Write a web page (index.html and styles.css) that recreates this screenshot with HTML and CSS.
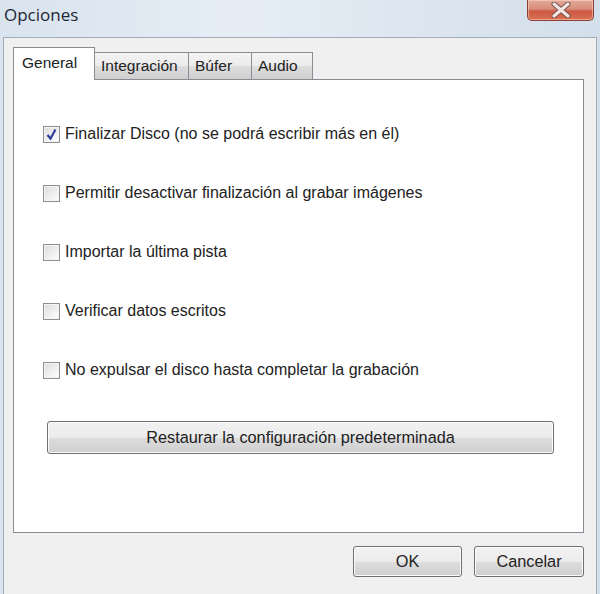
FILE: index.html
```html
<!DOCTYPE html>
<html lang="es">
<head>
    <meta charset="UTF-8">
    <title>Opciones</title>
    <link rel="stylesheet" href="styles.css">
</head>
<body>
    <div class="window">
        <div class="titlebar">
            <span class="title">Opciones</span>
            <button class="close" title="Cerrar">
                <svg width="22" height="16" viewBox="0 0 22 16">
                    <path d="M4 2 L18 14 M18 2 L4 14" stroke="#7a5552" stroke-width="5" stroke-linecap="round"/>
                    <path d="M4 2 L18 14 M18 2 L4 14" stroke="#f4e6e3" stroke-width="3" stroke-linecap="round"/>
                </svg>
            </button>
        </div>

        <div class="client">
            <div class="tabs">
                <div class="tab active">General</div>
                <div class="tab">Integración</div>
                <div class="tab">Búfer</div>
                <div class="tab">Audio</div>
            </div>

            <div class="panel">
                <label class="option">
                    <span class="box checked">
                        <svg width="13" height="13" viewBox="0 0 13 13">
                            <path d="M2.5 7 L5.5 10.5 L10.5 1.5" fill="none" stroke="#2f3f99" stroke-width="2.2"/>
                        </svg>
                    </span>
                    Finalizar Disco (no se podrá escribir más en él)
                </label>
                <label class="option"><span class="box"></span>Permitir desactivar finalización al grabar imágenes</label>
                <label class="option"><span class="box"></span>Importar la última pista</label>
                <label class="option"><span class="box"></span>Verificar datos escritos</label>
                <label class="option"><span class="box"></span>No expulsar el disco hasta completar la grabación</label>

                <button class="btn restore">Restaurar la configuración predeterminada</button>
            </div>

            <div class="actions">
                <button class="btn ok">OK</button>
                <button class="btn cancel">Cancelar</button>
            </div>
        </div>
    </div>
</body>
</html>
```

FILE: styles.css
```css
body {
    margin: 0;
    font-family: "Liberation Sans", Arial, sans-serif;
    color: #222;
}
.window {
    width: 600px;
    height: 594px;
    background: linear-gradient(to right, #d9e4ef 0%, #e6edf5 40%, #d3dfeb 100%);
    overflow: hidden;
}
.titlebar {
    height: 37px;
    display: flex;
    justify-content: space-between;
    align-items: flex-start;
}
.title {
    font-family: "Open Sans", "Liberation Sans", sans-serif;
    font-size: 17px;
    color: #1e2733;
    padding: 3px 0 0 4px;
}
.close {
    width: 67px;
    height: 21px;
    margin-right: 6px;
    padding: 0;
    border: 1px solid #8d3f35;
    border-top: none;
    border-radius: 0 0 5px 5px;
    background: linear-gradient(to bottom, #e3a999 0%, #d98e7b 45%, #cc5a45 55%, #da7050 100%);
    box-shadow: inset 0 0 0 1px rgba(255, 220, 210, 0.5);
    display: flex;
    align-items: center;
    justify-content: center;
}
.client {
    margin: 0 3px;
    height: 552px;
    border: 1px solid #a3acb8;
    background: #f0f0f0;
    padding: 10px 12px 0 9px;
}
.tabs {
    display: flex;
    align-items: flex-end;
    height: 31px;
    position: relative;
    z-index: 1;
}
.tab {
    font-size: 15.5px;
    height: 26px;
    line-height: 26px;
    padding: 0 6px;
    border: 1px solid #898c95;
    border-bottom: none;
    border-left: none;
    background: linear-gradient(to bottom, #f3f3f3 0%, #ebebeb 50%, #dddddd 51%, #cfcfcf 100%);
}
.tab:nth-child(2) {
    width: 81px;
}
.tab:nth-child(3) {
    width: 50px;
}
.tab:nth-child(4) {
    width: 48px;
}
.tab.active {
    height: 32px;
    line-height: 30px;
    width: 67px;
    padding: 0 5px 0 8px;
    border-left: 1px solid #898c95;
    background: #ffffff;
    margin-bottom: -1px;
}
.panel {
    width: 569px;
    height: 452px;
    border: 1px solid #898c95;
    background: #ffffff;
    display: flex;
    flex-direction: column;
    align-items: flex-start;
}
.option {
    display: flex;
    align-items: center;
    height: 20px;
    margin-left: 29px;
    font-size: 16px;
    gap: 5px;
}
.option:first-child {
    margin-top: 44px;
}
.option + .option {
    margin-top: 39px;
}
.box {
    width: 15px;
    height: 15px;
    border: 1px solid #8e8f8f;
    background: linear-gradient(135deg, #dcdcdc 0%, #f4f4f4 70%, #ffffff 100%);
    box-shadow: inset 0 0 0 1px #f4f4f4;
    display: flex;
    align-items: center;
    justify-content: center;
}
.btn {
    font-family: "Liberation Sans", Arial, sans-serif;
    font-size: 16.3px;
    color: #222;
    border: 1px solid #707070;
    border-radius: 3px;
    background: linear-gradient(to bottom, #f2f2f2 0%, #ebebeb 50%, #dddddd 51%, #cfcfcf 100%);
    box-shadow: inset 0 0 0 1px #fbfbfb;
    padding: 0;
}
.restore {
    margin: 41px 0 0 33px;
    width: 507px;
    height: 33px;
}
.actions {
    display: flex;
    justify-content: flex-end;
    gap: 12px;
    margin-top: 13px;
}
.ok {
    width: 109px;
    height: 31px;
}
.cancel {
    width: 110px;
    height: 31px;
}
```
